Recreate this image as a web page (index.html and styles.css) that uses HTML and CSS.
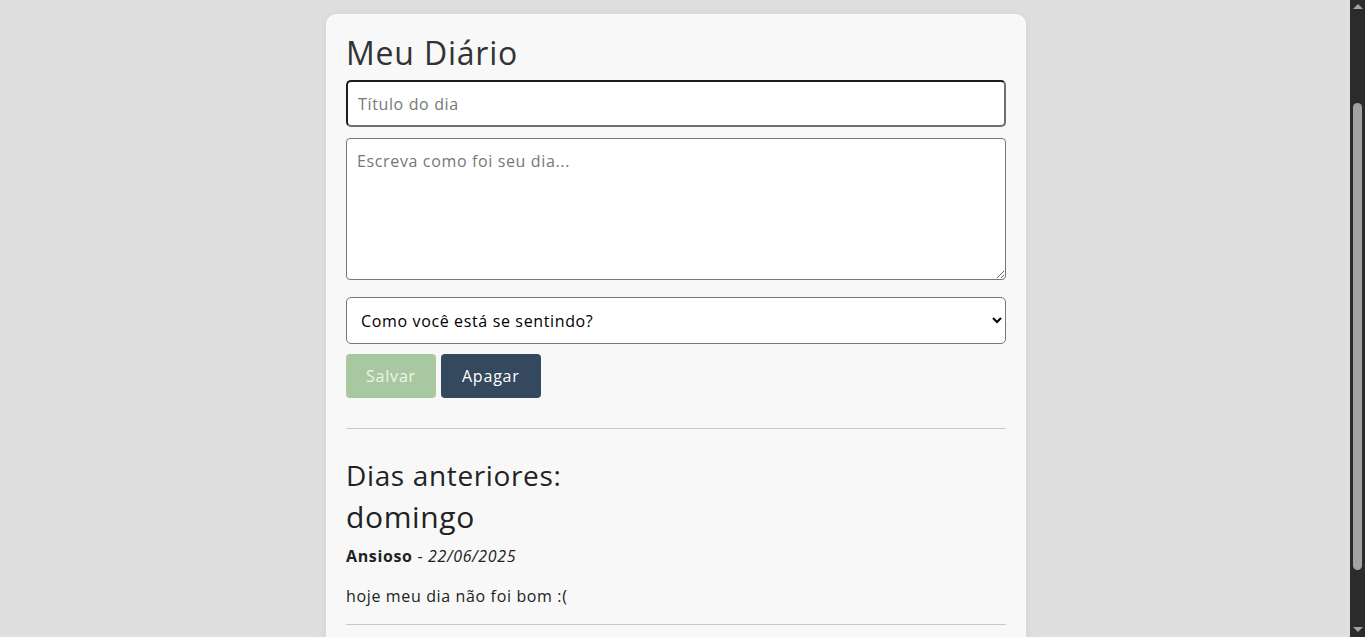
FILE: index.html
```html
<!DOCTYPE html>
<html lang="pt-BR">
<head>
<meta charset="utf-8">
<title>Meu Diário</title>
<link rel="stylesheet" href="styles.css">
</head>
<body>
<div class="viewport">
  <main class="card">
    <h1 class="title">Meu Diário</h1>
    <form class="form">
      <input class="field field-title" type="text" placeholder="Título do dia">
      <textarea class="field field-text" placeholder="Escreva como foi seu dia..."></textarea>
      <select class="field field-mood">
        <option>Como você está se sentindo?</option>
        <option>Feliz</option>
        <option>Ansioso</option>
      </select>
      <div class="actions">
        <button type="button" class="btn btn-save">Salvar</button>
        <button type="button" class="btn btn-clear">Apagar</button>
      </div>
    </form>
    <hr class="divider">
    <h2 class="section-title">Dias anteriores:</h2>
    <article class="entry">
      <h3 class="entry-title">domingo</h3>
      <p class="entry-meta"><strong>Ansioso</strong> - <em>22/06/2025</em></p>
      <p class="entry-text">hoje meu dia não foi bom :(</p>
      <hr class="entry-divider">
    </article>
  </main>
</div>
<aside class="scrollbar" aria-hidden="true">
  <span class="arrow arrow-up"></span>
  <span class="thumb"></span>
  <span class="arrow arrow-down"></span>
</aside>
</body>
</html>
```

FILE: styles.css
```css
html {
  overflow: hidden;
}

body {
  margin: 0;
  display: flex;
  align-items: flex-start;
  background: #dfdfdf;
  font-family: "Open Sans", "Liberation Sans", sans-serif;
  letter-spacing: 0.04em;
  color: #222;
}

.viewport {
  flex: 1;
  padding: 14px 0 0 2px;
}

.card {
  width: 700px;
  min-height: 700px;
  box-sizing: border-box;
  margin: 0 auto;
  padding: 20px;
  background: #f8f8f8;
  border-radius: 10px;
  box-shadow: 0 0 10px rgba(0, 0, 0, 0.06);
}

.title {
  margin: 0 0 8px;
  font-size: 32px;
  line-height: 38px;
  font-weight: 500;
  letter-spacing: 0.025em;
  color: #333;
}

.form {
  display: flex;
  flex-direction: column;
}

.field {
  box-sizing: border-box;
  width: 100%;
  font-family: inherit;
  letter-spacing: inherit;
  font-size: 16px;
  border: 1px solid #767676;
  border-radius: 5px;
  background: #fff;
  color: #000;
}

.field::placeholder {
  color: #777;
}

.field-title {
  height: 47px;
  padding: 0 10px;
  border-width: 2px;
  border-color: #1d1d1d #6e6e6e #6e6e6e #1d1d1d;
  outline: none;
}

.field-text {
  margin-top: 11px;
  height: 142px;
  padding: 11px 10px;
  resize: vertical;
  border-radius: 4px;
}

.field-mood {
  margin-top: 17px;
  height: 47px;
  padding: 0 10px;
}

.actions {
  display: flex;
  gap: 5px;
  margin-top: 10px;
}

.btn {
  height: 44px;
  padding: 0 20px;
  border: none;
  border-radius: 4px;
  font-family: inherit;
  letter-spacing: 0.05em;
  font-size: 16px;
  font-weight: 500;
  color: #fff;
}

.btn-save {
  background: #a8c8a2;
  color: #eef5ec;
}

.btn-clear {
  padding: 0 21px;
  background: #34495e;
}

.divider {
  margin: 30px 0 0;
  border: none;
  border-top: 1px solid #c8c8c8;
}

.section-title {
  margin: 26px 0 0;
  font-size: 28px;
  line-height: 40px;
  font-weight: 500;
  color: #222;
}

.entry-title {
  margin: 0;
  font-size: 30px;
  line-height: 44px;
  font-weight: 500;
  color: #222;
}

.entry-meta {
  margin: 5px 0 0;
  font-size: 16px;
  line-height: 24px;
}

.entry-text {
  margin: 16px 0 0;
  font-size: 16px;
  line-height: 24px;
}

.entry-divider {
  margin: 16px 0 0;
  border: none;
  border-top: 1px solid #c8c8c8;
}

.scrollbar {
  flex: none;
  width: 15px;
  height: 100vh;
  background: #2b2b2b;
  display: flex;
  flex-direction: column;
  align-items: center;
}

.arrow {
  width: 0;
  height: 0;
  border-left: 5px solid transparent;
  border-right: 5px solid transparent;
}

.arrow-up {
  margin-top: 4px;
  border-bottom: 5px solid #a3a3a3;
}

.arrow-down {
  margin-top: auto;
  margin-bottom: 5px;
  border-top: 5px solid #a3a3a3;
}

.thumb {
  width: 9px;
  height: 467px;
  margin-top: 94px;
  border-radius: 5px;
  background: #a3a3a3;
}
```
